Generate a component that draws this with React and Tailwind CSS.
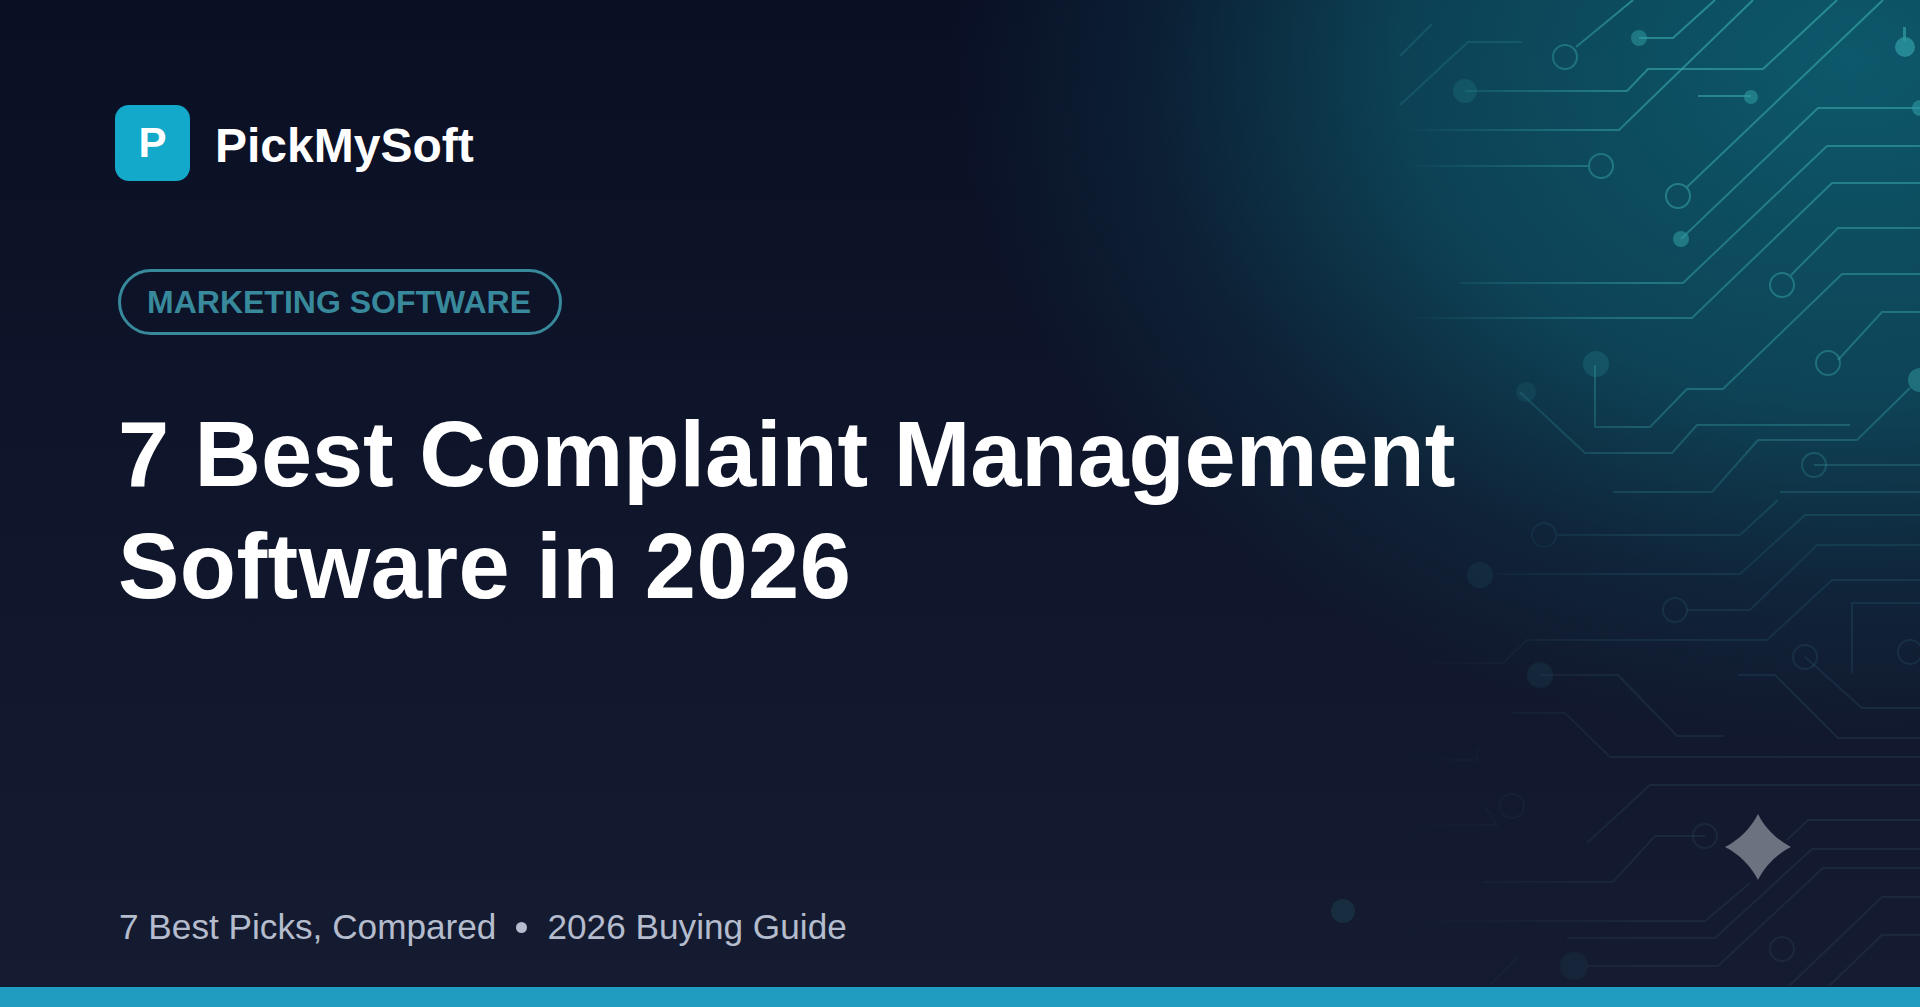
import React from "react";

const font = "font-['Liberation_Sans',Arial,sans-serif]";

// traces taken from the reference, in page pixels
const traces = [
  "M1576 47L1633 0",
  "M1639 38H1673L1715 0",
  "M1465 91H1627L1648 69H1763L1837 0",
  "M1400 130H1619L1753 0",
  "M1400 166H1588",
  "M1698 96H1751",
  "M1687 187L1883 0",
  "M1681 239L1818 108H1920",
  "M1460 283H1683L1827 146H1920",
  "M1400 318H1692L1832 183H1920",
  "M1791 275L1838 228H1920",
  "M1595 365V427H1650L1687 389H1723L1842 274H1920",
  "M1838 360L1882 312H1920",
  "M1520 392L1585 453H1672L1697 425H1850",
  "M1910 388L1857 440H1758L1712 492H1613",
  "M1814 465H1920",
  "M1780 492H1920",
  "M1778 500L1740 535H1557",
  "M1920 515H1805L1740 574H1497",
  "M1920 545H1817L1750 610H1687",
  "M1920 580H1832L1767 640H1527L1503 663H1400",
  "M1920 603H1852V673",
  "M1805 657L1862 708H1920",
  "M1738 675H1775L1838 738H1920",
  "M1540 675H1618L1677 736H1723",
  "M1512 713H1565L1610 757H1920",
  "M1400 760H1477L1478 747",
  "M1587 843L1650 785H1920",
  "M1485 806L1497 825H1420L1400 842",
  "M1920 820H1808L1787 840",
  "M1705 836H1655L1613 882H1483",
  "M1920 849H1812L1715 938H1567",
  "M1750 883L1705 921H1420L1400 940",
  "M1920 868H1823L1718 966H1587",
  "M1920 897H1882L1790 985",
  "M1920 935H1882L1830 985",
  "M1490 985L1517 958",
];

const rings = [
  [1565, 57], [1601, 166], [1678, 196], [1782, 285], [1828, 363], [1814, 465],
  [1544, 535], [1675, 610], [1805, 657], [1910, 652], [1512, 806], [1705, 836], [1782, 949],
];

// x, y, radius, opacity
const dots = [
  [1639, 38, 8, 0.55], [1465, 91, 12, 0.2], [1751, 97, 7, 0.6], [1681, 239, 8, 0.6], [1596, 364, 13, 0.22],
  [1526, 392, 10, 0.12], [1480, 575, 13, 0.1], [1540, 675, 13, 0.1], [1574, 966, 14, 0.08],
  [1905, 47, 10, 0.75], [1920, 108, 8, 0.6], [1920, 380, 12, 0.5], [1343, 911, 12, 0.14],
];

const Circuit = () => (
  <svg className="absolute inset-0 h-full w-full" viewBox="0 0 1920 1007" fill="none">
    <defs>
      <linearGradient id="trace" gradientUnits="userSpaceOnUse" x1="0" y1="0" x2="0" y2="987">
        <stop offset="0" stopColor="#35a3a8" stopOpacity="0.7" />
        <stop offset="0.4" stopColor="#35a3a8" stopOpacity="0.42" />
        <stop offset="0.55" stopColor="#3a8f9c" stopOpacity="0.16" />
        <stop offset="1" stopColor="#5a7a96" stopOpacity="0.12" />
      </linearGradient>
      <linearGradient id="fadeLeft" gradientUnits="userSpaceOnUse" x1="1400" y1="0" x2="1640" y2="0">
        <stop offset="0" stopColor="#fff" stopOpacity="0" />
        <stop offset="1" stopColor="#fff" stopOpacity="1" />
      </linearGradient>
      <mask id="fade" maskUnits="userSpaceOnUse" x="0" y="0" width="1920" height="1007">
        <rect width="1920" height="1007" fill="url(#fadeLeft)" />
      </mask>
    </defs>
    <path d="M1400 105L1468 42H1522M1400 56L1432 24" stroke="#35a3a8" strokeOpacity="0.2" strokeWidth="2" />
    <g mask="url(#fade)" stroke="url(#trace)" strokeWidth="2">
      {traces.map((d) => (
        <path key={d} d={d} />
      ))}
      {rings.map(([cx, cy]) => (
        <circle key={`${cx}-${cy}`} cx={cx} cy={cy} r="12" />
      ))}
    </g>
    <g fill="#2f9aa2">
      {dots.map(([cx, cy, r, o]) => (
        <circle key={`${cx}-${cy}`} cx={cx} cy={cy} r={r} opacity={o} />
      ))}
      <rect x="1903" y="27" width="3" height="14" opacity="0.75" />
    </g>
  </svg>
);

const Sparkle = () => (
  <svg className="absolute left-[1725px] top-[814px] h-[66px] w-[66px]" viewBox="0 0 66 66">
    <path d="M33 0C40 14 52 26 66 33C52 40 40 52 33 66C26 52 14 40 0 33C14 26 26 14 33 0Z" fill="#6b7280" />
  </svg>
);

export default function App() {
  return (
    <div className={`relative flex h-[1007px] w-full flex-col overflow-hidden bg-[linear-gradient(180deg,#0a0f24_0%,#0e1429_40%,#151c31_100%)] ${font}`}>
      <div className="absolute inset-0 bg-[radial-gradient(ellipse_900px_680px_at_1850px_60px,rgba(14,116,134,0.72)_0%,rgba(14,110,128,0.52)_50%,rgba(14,90,110,0.2)_78%,rgba(14,90,110,0)_100%)]" />
      <Circuit />
      <Sparkle />

      <div className="relative flex flex-1 flex-col pl-[115px]">
        <div className="mt-[105px] flex items-center gap-[25px]">
          <div className="flex h-[76px] w-[75px] items-center justify-center rounded-[14px] bg-[#12a9cb] pb-[2px] text-[42px] font-bold text-white">
            P
          </div>
          <span className="pt-[5px] text-[48px] font-bold leading-none text-white">PickMySoft</span>
        </div>

        <div className="mt-[88px] ml-[3px] flex h-[66px] w-[444px] items-center justify-center rounded-full border-[3px] border-[#37899b] pr-[2px] text-[32px] font-bold text-[#37899b]">
          MARKETING SOFTWARE
        </div>

        <h1 className="mt-[63px] ml-[3px] text-[92px] font-bold leading-[112px] text-white">
          <span className="tracking-[-0.08px]">7 Best Complaint Management</span>
          <br />
          <span className="tracking-[0.45px]">Software in 2026</span>
        </h1>

        <div className="mt-auto mb-[38px] ml-[4px] flex items-center text-[35.2px] leading-[44px] text-[#b4bccd]">
          <span>7 Best Picks, Compared</span>
          <span className="mx-[20px] h-[11px] w-[11px] rounded-full bg-[#b4bccd]" />
          <span>2026 Buying Guide</span>
        </div>
      </div>

      <div className="relative h-[20px] bg-[#1f9cc0]" />
    </div>
  );
}
